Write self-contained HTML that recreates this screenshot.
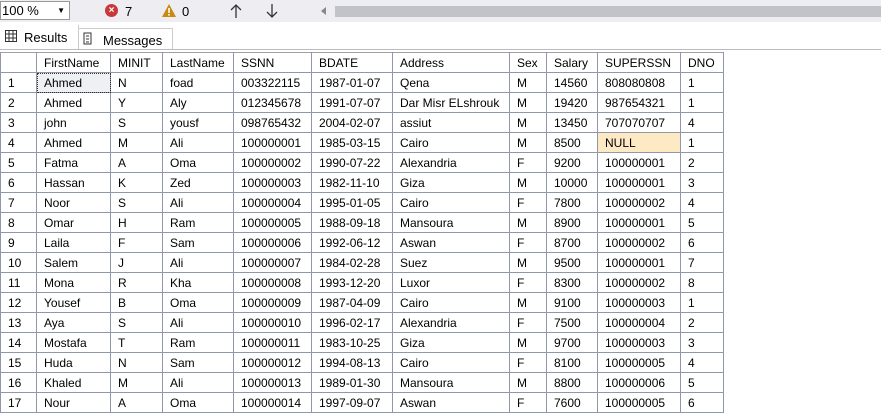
<!DOCTYPE html>
<html><head><style>
body{margin:0;width:881px;height:412px;overflow:hidden;background:#fff;font-family:"Liberation Sans",Arial,sans-serif;font-size:12px;color:#000;position:relative}
.tb{position:absolute;left:0;top:0;width:881px;height:22px;background:#eeeef2}
.tabs{position:absolute;top:22px;left:0;width:881px;height:28px;background:#fff}
table{position:absolute;left:0;top:52px;border-collapse:collapse;table-layout:fixed}
td{border:1px solid #8f98a8;height:19px;padding:0 0 0 7px;white-space:nowrap;overflow:hidden;font-size:12px}
tr:first-child td{border-top:1px solid #a0a0a0}
</style></head><body>
<div class="tb">
 <div style="position:absolute;left:0;top:1px;width:70px;height:19px;background:#fff;border:1px solid #999;box-sizing:border-box;font-size:13px;padding-left:1px;line-height:17px">100 %<span style="position:absolute;right:4px;top:0;font-size:8px">▼</span></div>
 <div style="position:absolute;left:105px;top:4px;width:13px;height:13px;border-radius:50%;background:#c9393b;color:#fff;font-size:10px;text-align:center;line-height:13px;font-weight:bold">×</div>
 <span style="position:absolute;left:125px;top:4px;font-size:13px">7</span>
 <svg style="position:absolute;left:162px;top:4px" width="14" height="13"><polygon points="7,0 14,13 0,13" fill="#c98a14"/><rect x="6.2" y="4" width="1.6" height="5" fill="#fff"/><rect x="6.2" y="10" width="1.6" height="1.6" fill="#fff"/></svg>
 <span style="position:absolute;left:182px;top:4px;font-size:13px">0</span>
 <svg style="position:absolute;left:230px;top:4px" width="12" height="14"><path d="M6 1V14M1 6L6 1L11 6" stroke="#333" fill="none" stroke-width="1.3"/></svg>
 <svg style="position:absolute;left:266px;top:4px" width="12" height="14"><path d="M6 0V13M1 8L6 13L11 8" stroke="#333" fill="none" stroke-width="1.3"/></svg>
 <div style="position:absolute;left:321px;top:7px;width:0;height:0;border-top:4px solid transparent;border-bottom:4px solid transparent;border-right:5px solid #888"></div>
 <div style="position:absolute;left:335px;top:6px;width:546px;height:11px;background:#c2c3c9"></div>
</div>
<div class="tabs">
 <div style="position:absolute;left:0;top:3px;width:78px;height:25px;background:#fff;border-right:1px solid #ccc"></div>
 <svg style="position:absolute;left:5px;top:8px" width="12" height="12"><path d="M.5 .5H11.5V11.5H.5ZM.5 4H11.5M.5 8H11.5M4 .5V11.5M8 .5V11.5" stroke="#333" fill="none"/></svg>
 <span style="position:absolute;left:24px;top:8px;font-size:13px">Results</span>
 <div style="position:absolute;left:78px;top:6px;width:95px;height:22px;background:#fff;border:1px solid #ccc;border-bottom:none;box-sizing:border-box"></div>
 <svg style="position:absolute;left:82px;top:10px" width="12" height="13"><path d="M2 1H9V12H2Z" stroke="#333" fill="none"/><path d="M4 4H7M4 7H7M4 10H7" stroke="#333"/></svg>
 <span style="position:absolute;left:103px;top:11px;font-size:13px">Messages</span>
 <div style="position:absolute;left:0;top:27px;width:881px;height:1px;background:#bbb"></div>
</div>
<table>
<colgroup><col style="width:36px"><col style="width:74px"><col style="width:52px"><col style="width:71px"><col style="width:78px"><col style="width:81px"><col style="width:117px"><col style="width:37px"><col style="width:51px"><col style="width:83px"><col style="width:43px"></colgroup>
<tr><td></td><td>FirstName</td><td>MINIT</td><td>LastName</td><td>SSNN</td><td>BDATE</td><td>Address</td><td>Sex</td><td>Salary</td><td>SUPERSSN</td><td>DNO</td></tr>
<tr><td>1</td><td style="background:#eef0f4;outline:1px dotted #333;outline-offset:-1px">Ahmed</td><td>N</td><td>foad</td><td>003322115</td><td>1987-01-07</td><td>Qena</td><td>M</td><td>14560</td><td>808080808</td><td>1</td></tr>
<tr><td>2</td><td>Ahmed</td><td>Y</td><td>Aly</td><td>012345678</td><td>1991-07-07</td><td>Dar Misr ELshrouk</td><td>M</td><td>19420</td><td>987654321</td><td>1</td></tr>
<tr><td>3</td><td>john</td><td>S</td><td>yousf</td><td>098765432</td><td>2004-02-07</td><td>assiut</td><td>M</td><td>13450</td><td>707070707</td><td>4</td></tr>
<tr><td>4</td><td>Ahmed</td><td>M</td><td>Ali</td><td>100000001</td><td>1985-03-15</td><td>Cairo</td><td>M</td><td>8500</td><td style="background:#fde9c4">NULL</td><td>1</td></tr>
<tr><td>5</td><td>Fatma</td><td>A</td><td>Oma</td><td>100000002</td><td>1990-07-22</td><td>Alexandria</td><td>F</td><td>9200</td><td>100000001</td><td>2</td></tr>
<tr><td>6</td><td>Hassan</td><td>K</td><td>Zed</td><td>100000003</td><td>1982-11-10</td><td>Giza</td><td>M</td><td>10000</td><td>100000001</td><td>3</td></tr>
<tr><td>7</td><td>Noor</td><td>S</td><td>Ali</td><td>100000004</td><td>1995-01-05</td><td>Cairo</td><td>F</td><td>7800</td><td>100000002</td><td>4</td></tr>
<tr><td>8</td><td>Omar</td><td>H</td><td>Ram</td><td>100000005</td><td>1988-09-18</td><td>Mansoura</td><td>M</td><td>8900</td><td>100000001</td><td>5</td></tr>
<tr><td>9</td><td>Laila</td><td>F</td><td>Sam</td><td>100000006</td><td>1992-06-12</td><td>Aswan</td><td>F</td><td>8700</td><td>100000002</td><td>6</td></tr>
<tr><td>10</td><td>Salem</td><td>J</td><td>Ali</td><td>100000007</td><td>1984-02-28</td><td>Suez</td><td>M</td><td>9500</td><td>100000001</td><td>7</td></tr>
<tr><td>11</td><td>Mona</td><td>R</td><td>Kha</td><td>100000008</td><td>1993-12-20</td><td>Luxor</td><td>F</td><td>8300</td><td>100000002</td><td>8</td></tr>
<tr><td>12</td><td>Yousef</td><td>B</td><td>Oma</td><td>100000009</td><td>1987-04-09</td><td>Cairo</td><td>M</td><td>9100</td><td>100000003</td><td>1</td></tr>
<tr><td>13</td><td>Aya</td><td>S</td><td>Ali</td><td>100000010</td><td>1996-02-17</td><td>Alexandria</td><td>F</td><td>7500</td><td>100000004</td><td>2</td></tr>
<tr><td>14</td><td>Mostafa</td><td>T</td><td>Ram</td><td>100000011</td><td>1983-10-25</td><td>Giza</td><td>M</td><td>9700</td><td>100000003</td><td>3</td></tr>
<tr><td>15</td><td>Huda</td><td>N</td><td>Sam</td><td>100000012</td><td>1994-08-13</td><td>Cairo</td><td>F</td><td>8100</td><td>100000005</td><td>4</td></tr>
<tr><td>16</td><td>Khaled</td><td>M</td><td>Ali</td><td>100000013</td><td>1989-01-30</td><td>Mansoura</td><td>M</td><td>8800</td><td>100000006</td><td>5</td></tr>
<tr><td>17</td><td>Nour</td><td>A</td><td>Oma</td><td>100000014</td><td>1997-09-07</td><td>Aswan</td><td>F</td><td>7600</td><td>100000005</td><td>6</td></tr>
</table>
</body></html>
